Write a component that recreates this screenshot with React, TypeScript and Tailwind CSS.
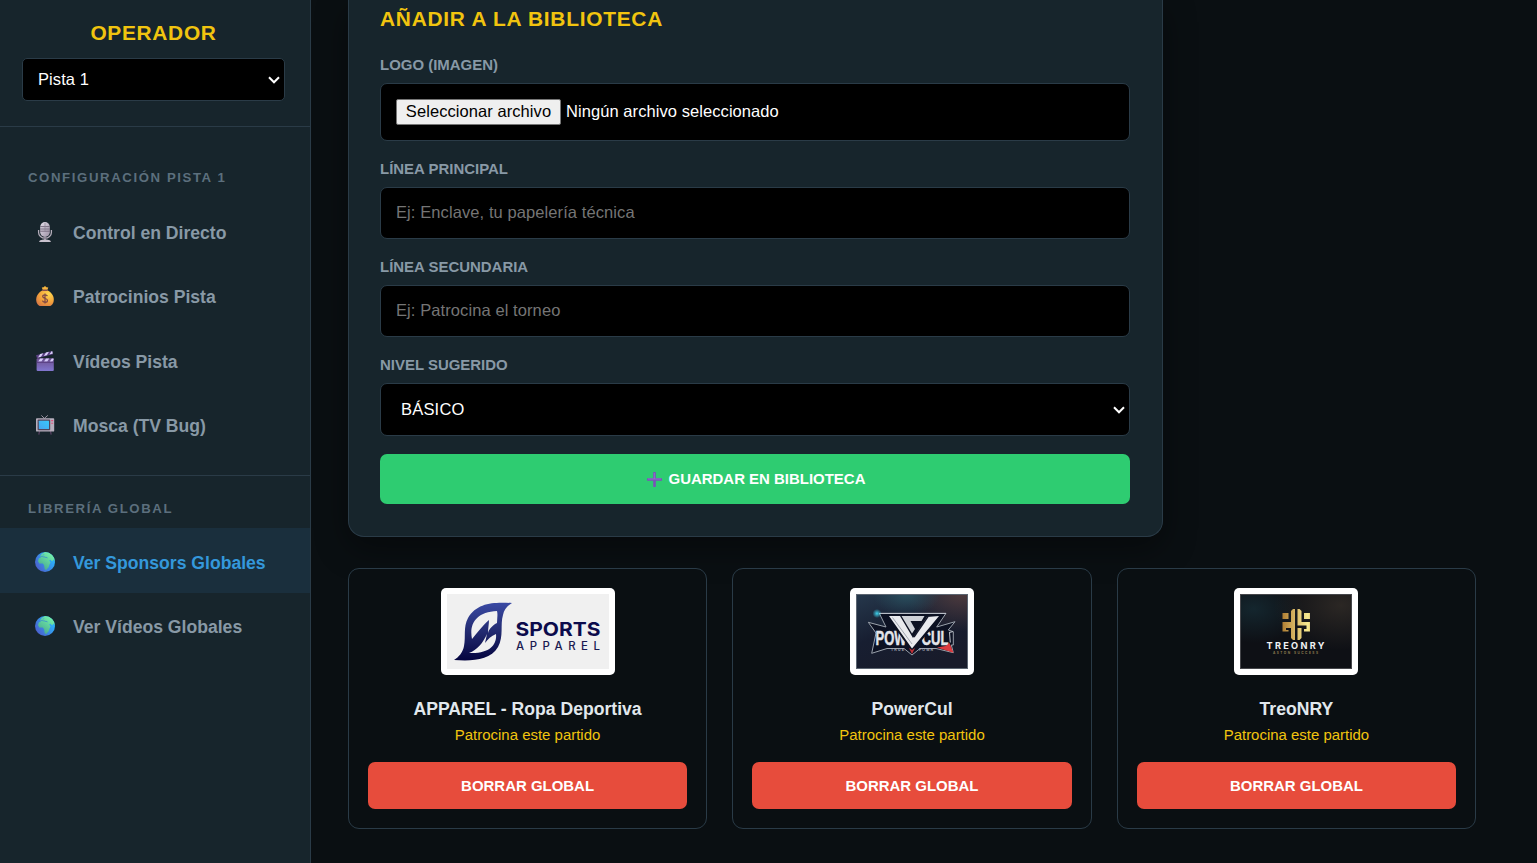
import type { ReactNode } from "react";

const FONT = "font-['Liberation_Sans',Arial,sans-serif]";

function MicIcon() {
  return (
    <svg width="20" height="20" viewBox="0 0 20 20">
      <defs>
        <linearGradient id="mic" x1="0" y1="0" x2="1" y2="1">
          <stop offset="0" stopColor="#e6e0ec" />
          <stop offset="1" stopColor="#9b90a3" />
        </linearGradient>
      </defs>
      <path d="M3.600 8v2.400a6.400 5.800 0 0 0 12.800 0V8" fill="none" stroke="#b5adba" strokeWidth="1.300" />
      <rect x="5.200" y="0" width="9.600" height="15" rx="4.800" fill="url(#mic)" />
      <path d="M5.200 4.600h9.600M5.200 7h9.600M5.200 9.200h9.600" stroke="#6f6478" strokeWidth="0.900" />
      <path d="M10 1v8.400" stroke="#8b8193" strokeWidth="0.700" />
      <rect x="9" y="15" width="2" height="3" fill="#8f8696" />
      <path d="M4.200 20c0-1.600 1.400-2.600 5.800-2.600s5.800 1 5.800 2.600z" fill="#c8c1cd" />
    </svg>
  );
}

function MoneyIcon() {
  return (
    <svg width="20" height="20" viewBox="0 0 20 20">
      <defs>
        <radialGradient id="bag" cx="0.7" cy="0.25" r="0.85">
          <stop offset="0" stopColor="#ffd84d" />
          <stop offset="0.6" stopColor="#f3a23c" />
          <stop offset="1" stopColor="#d97a45" />
        </radialGradient>
      </defs>
      <path d="M6.800 1.400 8.600 1.200 10 0l1.400 1.200 1.900.2-1.200 3H8z" fill="#f6b63e" />
      <path d="M8 4.200C4.600 5.400 1.200 9 1.200 13.400c0 4 2 6.600 5 6.600h7.600c3 0 5-2.600 5-6.600 0-4.400-3.400-8-6.800-9.200z" fill="url(#bag)" />
      <rect x="7.300" y="3.600" width="5.400" height="1.400" rx="0.700" fill="#8a4f4e" />
      <path d="M12.400 10.200c-.3-1-1.200-1.400-2.400-1.400-1.400 0-2.300.7-2.300 1.800 0 2.600 4.800 1.200 4.800 3.800 0 1.200-1 1.900-2.500 1.900-1.300 0-2.300-.5-2.600-1.600M10 7.600v10" fill="none" stroke="#7d4546" strokeWidth="1.200" />
    </svg>
  );
}

function ClapperIcon() {
  return (
    <svg width="20" height="20" viewBox="0 0 20 20">
      <defs>
        <linearGradient id="clap" x1="0" y1="0" x2="0" y2="1">
          <stop offset="0" stopColor="#6c4f8e" />
          <stop offset="1" stopColor="#8176cf" />
        </linearGradient>
      </defs>
      <path d="M1 4.200 17 0l1 3.200L2 7.200z" fill="#5b4184" />
      <path d="m3 6.400 2.200-3.300 3-.8L6 5.700zM8.800 4.900 11 1.600l3-.8-2.200 3.400zM14.400 3.500l2.200-3.300.6-.1.600 2.500z" fill="#dcd3fb" />
      <rect x="1.600" y="7.200" width="17.200" height="12.800" rx="1" fill="url(#clap)" />
      <path d="m3.200 10.600 2-3h3.200l-2 3zM9 10.600l2-3h3.200l-2 3zM14.800 10.600l2-3h1.800v1l-1.200 2z" fill="#d6cbfa" />
      <path d="M1.600 11.300h17.200" stroke="#543a7a" strokeWidth="0.900" />
    </svg>
  );
}

function TvIcon() {
  return (
    <svg width="20" height="20" viewBox="0 0 20 20">
      <defs>
        <linearGradient id="tv" x1="1" y1="0" x2="0" y2="1">
          <stop offset="0" stopColor="#38c8fb" />
          <stop offset="1" stopColor="#46a4ee" />
        </linearGradient>
      </defs>
      <path d="M6.400.4 9.400 3.400 12.800.4" fill="none" stroke="#a79fae" strokeWidth="0.900" />
      <path d="M4.600 16 3.800 19.600M15.400 16l.8 3.600" stroke="#54405f" strokeWidth="1.300" />
      <rect x="1" y="3.200" width="18.200" height="13.400" rx="0.900" fill="#b7afbd" />
      <rect x="2.600" y="4.600" width="12.600" height="10.600" rx="0.800" fill="#51475c" />
      <rect x="3.800" y="5.800" width="10.200" height="8.200" rx="0.500" fill="url(#tv)" />
      <path d="M16.200 5.600h2M16.200 8.200h2" stroke="#e0527d" strokeWidth="1.100" />
    </svg>
  );
}

function GlobeIcon() {
  return (
    <svg width="20" height="20" viewBox="0 0 20 20">
      <defs>
        <linearGradient id="sea" x1="0.900" y1="0.400" x2="0.200" y2="0.900">
          <stop offset="0" stopColor="#2bb0fb" />
          <stop offset="1" stopColor="#4a63cf" />
        </linearGradient>
        <linearGradient id="land" x1="1" y1="0" x2="0.300" y2="1">
          <stop offset="0" stopColor="#7dffb0" />
          <stop offset="1" stopColor="#48a98f" />
        </linearGradient>
        <clipPath id="globe">
          <circle cx="10" cy="10" r="10" />
        </clipPath>
      </defs>
      <g clipPath="url(#globe)">
        <rect width="20" height="20" fill="url(#sea)" />
        <path
          d="M7 1.800 10 0h7l3 4v5.400l-1.600-1.800-1.200 1.800-1.800-1.600-1.200.8 1.400 2-1 1.600-1 3-2.400 2.700-1.500-.6-.6-4-1.200-1.700-3.600-.2L3 9.200l.8-2.600 2-1.200-.6-1.300z"
          fill="url(#land)"
        />
        <path d="M5.600 4.700c1.800-.8 2.300.4 3.700.2 1.200.9 2.600.3 3.200 1" fill="none" stroke="#3a86d4" strokeWidth="0.800" />
        <path d="M9 2.200 7.800 3.600" stroke="#3fa6e6" strokeWidth="0.900" />
      </g>
    </svg>
  );
}

function PlusIcon() {
  return (
    <svg width="15" height="15" viewBox="0 0 15 15">
      <path d="M7.500.8v13.400M.8 7.500h13.400" stroke="#7b52b8" strokeWidth="2.600" strokeLinecap="round" />
      <path d="M7.300 1v6M1 7h13" stroke="#9b72d6" strokeWidth="0.800" />
    </svg>
  );
}

function Chevron({ className }: { className: string }) {
  return (
    <svg width="12" height="8" viewBox="0 0 12 8" className={`absolute pointer-events-none ${className}`}>
      <path d="m1 1.300 5 5 5-5" fill="none" stroke="#ffffff" strokeWidth="2" />
    </svg>
  );
}

function ApparelLogo() {
  return (
    <svg width="162" height="75" viewBox="0 0 162 75">
      <defs>
        <linearGradient id="apparel" x1="0" y1="0" x2="0" y2="1">
          <stop offset="0" stopColor="#3a4aa4" />
          <stop offset="0.500" stopColor="#232b70" />
          <stop offset="1" stopColor="#04043f" />
        </linearGradient>
      </defs>
      <rect width="162" height="75" fill="#f0f0f0" />
      <path
        fillRule="evenodd"
        fill="url(#apparel)"
        d="M65 9C48 8 30 8 21 24c-5 9-2 19-4 28-1 6-5 11-10 14 17 1 36 1 44-13 6-11 2-22 5-32 1-5 4-9 9-12zM25 45c-3-15 4-27 25-28 1 4 0 8 0 12-4 2-8 6-9 10 0-5 1-9 1-13-6 5-12 13-17 19zM22 59c8-3 14-10 18-19l-2 9c3-4 6-7 11-9 1 10-5 20-27 19z"
      />
      <text x="68.500" y="41.600" fontFamily="Inter, sans-serif" fontWeight="700" fontSize="19" fill="#0c0b4c" textLength="85" lengthAdjust="spacingAndGlyphs">
        SPORTS
      </text>
      <text x="69" y="55.800" fontFamily="Inter, sans-serif" fontWeight="500" fontSize="11.400" fill="#1b1a50" textLength="84">
        APPAREL
      </text>
    </svg>
  );
}

function PowerLogo() {
  return (
    <svg width="112" height="75" viewBox="0 0 112 75">
      <defs>
        <linearGradient id="powerBg" x1="0" y1="0" x2="0.600" y2="1">
          <stop offset="0" stopColor="#26384c" />
          <stop offset="0.500" stopColor="#171e31" />
          <stop offset="1" stopColor="#181b2a" />
        </linearGradient>
        <radialGradient id="powerWarm" cx="0.950" cy="0" r="0.500">
          <stop offset="0" stopColor="#4d3a3d" />
          <stop offset="1" stopColor="#4d3a3d" stopOpacity="0" />
        </radialGradient>
        <radialGradient id="powerTeal" cx="0.450" cy="0" r="0.300">
          <stop offset="0" stopColor="#2a4f5e" />
          <stop offset="1" stopColor="#2a4f5e" stopOpacity="0" />
        </radialGradient>
        <radialGradient id="spark">
          <stop offset="0" stopColor="#3ed2ee" />
          <stop offset="1" stopColor="#3ed2ee" stopOpacity="0" />
        </radialGradient>
      </defs>
      <rect width="112" height="75" fill="url(#powerBg)" />
      <rect width="112" height="75" fill="url(#powerWarm)" />
      <rect width="112" height="75" fill="url(#powerTeal)" />
      <rect x="0.500" y="0.500" width="111" height="74" fill="none" stroke="#5b6470" />
      <path
        d="M12.300 28.300 30 33l-6.700-13.700H90L80.700 33 99 27.700 92.300 36l5 1.700V51l-2 0 2 7.700L80 54.500H64L56 61l-8-6.500H31l-15.300 4.800L20 39z"
        fill="#0c1122"
        stroke="#9aa1ab"
        strokeWidth="1"
      />
      <g fontFamily="Liberation Sans, Arial, sans-serif" fontWeight="700" fill="#e4e5ea" stroke="#e4e5ea" strokeWidth="0.500">
        <text x="19.500" y="51" fontSize="21" textLength="31" lengthAdjust="spacingAndGlyphs">
          POW
        </text>
        <text x="65.500" y="51" fontSize="21" textLength="27" lengthAdjust="spacingAndGlyphs">
          CUL
        </text>
      </g>
      <path d="M30 21h57L56 58z" fill="#0c1122" />
      <path d="M33 22h11l13 22 14-21 12-1L56 54.500z" fill="#e9eaee" />
      <path d="M45.500 22h23l-3 5H54.500l4.500 8-3 4.500z" fill="#cfd2d8" />
      <path d="M36.500 23.500 56 50" stroke="#8e949f" strokeWidth="0.800" />
      <path d="M72 22.500 58 43" stroke="#131729" strokeWidth="1.400" />
      <path d="M23 19.500h67" stroke="#b9bec7" strokeWidth="1.200" />
      <path d="m56 60-3-6 3 2 3-2z" fill="#bd3238" />
      <path d="m81 53.500 8.500-1.500 4-3 4 9.700z" fill="#dc3b40" />
      <path d="m97 37.500-3.500 1 .8 10" fill="none" stroke="#b5bac2" strokeWidth="1.100" />
      <circle cx="21" cy="19.500" r="4.500" fill="url(#spark)" />
      <g fontFamily="Liberation Sans, Arial, sans-serif" fontWeight="700" fontSize="3.500" fill="#a7abb6">
        <text x="35" y="57" textLength="13">
          TRUE
        </text>
        <text x="63" y="57" textLength="14">
          POWR
        </text>
      </g>
    </svg>
  );
}

function TreonryLogo() {
  return (
    <svg width="112" height="75" viewBox="0 0 112 75">
      <defs>
        <radialGradient id="treoTeal" cx="0.120" cy="0.200" r="0.450">
          <stop offset="0" stopColor="#14262e" />
          <stop offset="1" stopColor="#14262e" stopOpacity="0" />
        </radialGradient>
        <radialGradient id="treoBrown" cx="0.900" cy="0.150" r="0.600">
          <stop offset="0" stopColor="#2b2724" />
          <stop offset="1" stopColor="#2b2724" stopOpacity="0" />
        </radialGradient>
        <linearGradient id="gold" gradientUnits="userSpaceOnUse" x1="42" y1="0" x2="71" y2="0">
          <stop offset="0" stopColor="#ae7c31" />
          <stop offset="0.450" stopColor="#d9b765" />
          <stop offset="0.900" stopColor="#f7ea91" />
          <stop offset="1" stopColor="#dfc067" />
        </linearGradient>
      </defs>
      <rect width="112" height="75" fill="#0e1015" />
      <rect width="112" height="75" fill="url(#treoTeal)" />
      <rect width="112" height="75" fill="url(#treoBrown)" />
      <rect x="0.500" y="0.500" width="111" height="74" fill="none" stroke="#45464a" />
      <g fill="url(#gold)">
        <path d="M42.500 19h6v6h-6zM64 19h6v6h-6z" />
        <path d="m51 17 2-2h2v31h-2l-2-2V34h-5v2h2.500v1.500h-6V28H51z" />
        <path d="M57.500 15h2l2 2v11H70v9.500h-6V35h2.500v-3.500h-9z" />
        <path d="M57.500 34h4v10l-2 2h-2z" />
      </g>
      <text x="26.500" y="54.800" fontFamily="Inter, sans-serif" fontWeight="700" fontSize="9.200" fill="#f1f1f2" textLength="58">
        TREONRY
      </text>
      <text x="33" y="60.300" fontFamily="Inter, sans-serif" fontWeight="700" fontSize="3.200" fill="#8d7b50" textLength="45">
        ASTON SUCCESS
      </text>
    </svg>
  );
}

interface NavItemProps {
  icon: ReactNode;
  label: string;
  active?: boolean;
}

function NavItem({ icon, label, active = false }: NavItemProps) {
  return (
    <button
      className={`flex h-[64.400px] w-full items-center pt-[3px] pl-[35px] text-left text-[17.600px] font-bold ${
        active ? "bg-[#1a2f3d] text-[#3498db]" : "text-[#8899a6]"
      }`}
    >
      <span className="mr-[18px] w-5 shrink-0">{icon}</span>
      <span className="pt-[2px]">{label}</span>
    </button>
  );
}

function Field({ label, children }: { label: string; children: ReactNode }) {
  return (
    <div className="mb-[18px]">
      <label className="mb-2 block h-5 text-[14.960px] leading-[19px] font-bold text-[#8899a6]">{label}</label>
      {children}
    </div>
  );
}

const inputClass =
  "block h-[52px] w-full rounded-[7px] border border-[#2a3b47] bg-black px-[15px] pb-[2px] text-[16.500px] tracking-[0.090px] text-white placeholder:text-[#757575]";

const sponsors = [
  { name: "APPAREL - Ropa Deportiva", tagline: "Patrocina este partido", logo: <ApparelLogo /> },
  { name: "PowerCul", tagline: "Patrocina este partido", logo: <PowerLogo /> },
  { name: "TreoNRY", tagline: "Patrocina este partido", logo: <TreonryLogo /> },
];

function Sidebar() {
  return (
    <aside className="w-[311px] shrink-0 border-r border-[#2a3b47] bg-[#17252c]">
      <div className="h-[127px] border-b border-[#2a3b47] pt-[18px] pr-[25px] pl-[22px]">
        <h1 className="h-10 text-center text-[20.900px] leading-[29px] font-bold tracking-[0.680px] text-[#f1c40f]">OPERADOR</h1>
        <div className="relative">
          <select className="block h-[43px] w-full appearance-none rounded-[5px] border border-[#2a3b47] bg-black px-[15px] text-[16.500px] tracking-[0.090px] text-white">
            <option>Pista 1</option>
          </select>
          <Chevron className="top-[18px] right-[5px]" />
        </div>
      </div>

      <nav>
        <p className="h-[71.400px] pt-[41px] pl-7 text-[13.200px] leading-5 font-bold tracking-[1.600px] text-[#5c6f7d]">
          CONFIGURACIÓN PISTA 1
        </p>
        <NavItem icon={<MicIcon />} label="Control en Directo" />
        <NavItem icon={<MoneyIcon />} label="Patrocinios Pista" />
        <NavItem icon={<ClapperIcon />} label="Vídeos Pista" />
        <NavItem icon={<TvIcon />} label="Mosca (TV Bug)" />
        <p className="mt-[19px] h-[53.400px] border-t border-[#2a3b47] pt-[23px] pl-7 text-[13.200px] leading-5 font-bold tracking-[1.600px] text-[#5c6f7d]">
          LIBRERÍA GLOBAL
        </p>
        <NavItem icon={<GlobeIcon />} label="Ver Sponsors Globales" active />
        <NavItem icon={<GlobeIcon />} label="Ver Vídeos Globales" />
      </nav>
    </aside>
  );
}

export default function App() {
  return (
    <div className={`flex h-[863px] w-full overflow-hidden bg-[#0a0f12] ${FONT}`}>
      <Sidebar />

      <main className="flex-1 overflow-hidden pl-[37px]">
        <section className="h-[537px] w-[815px] rounded-b-[16px] border border-t-0 border-[#2a3b47] bg-[#17252c] pt-[4px] pr-8 pl-[31px] shadow-[0_11px_33px_rgba(0,0,0,0.400)]">
          <h2 className="mb-[21px] h-[30px] text-[20.900px] leading-[30px] font-bold tracking-[0.730px] text-[#f1c40f]">
            AÑADIR A LA BIBLIOTECA
          </h2>

          <Field label="LOGO (IMAGEN)">
            <div className="flex h-[58px] w-full items-center rounded-[7px] border border-[#2a3b47] bg-black px-[15px] text-[16.500px] tracking-[0.070px] text-white">
              <button className="mr-[5px] h-[26px] w-[165px] rounded-[2px] border border-[#767676] bg-[#efefef] pb-[2px] text-center leading-[22px] text-black">
                Seleccionar archivo
              </button>
              <span className="pb-[2px]">Ningún archivo seleccionado</span>
            </div>
          </Field>

          <Field label="LÍNEA PRINCIPAL">
            <input className={inputClass} placeholder="Ej: Enclave, tu papelería técnica" />
          </Field>

          <Field label="LÍNEA SECUNDARIA">
            <input className={inputClass} placeholder="Ej: Patrocina el torneo" />
          </Field>

          <Field label="NIVEL SUGERIDO">
            <div className="relative">
              <select className="block h-[53px] w-full appearance-none rounded-[7px] border border-[#2a3b47] bg-black px-5 text-[16.500px] tracking-[0.200px] text-white">
                <option>BÁSICO</option>
              </select>
              <Chevron className="top-[23px] right-[5px]" />
            </div>
          </Field>

          <button className="flex h-[50px] w-full items-center justify-center gap-[7px] rounded-[7px] bg-[#2ecc71] pl-[2px] text-[14.960px] font-bold text-white">
            <PlusIcon />
            <span className="pt-px">GUARDAR EN BIBLIOTECA</span>
          </button>
        </section>

        <div className="mt-[31px] grid w-[1128px] grid-cols-3 gap-[25.300px]">
          {sponsors.map((s) => (
            <article
              key={s.name}
              className="flex h-[261px] flex-col items-center rounded-[11px] border border-[#2a3b47] bg-[#0a0f12] px-[19px] pt-[19px]"
            >
              <div className="rounded-[5px] bg-white p-[6px]">{s.logo}</div>
              <h3 className="mt-[22px] text-[17.600px] leading-6 font-bold text-[#e1e8ed]">{s.name}</h3>
              <p className="mt-1 text-[14.960px] leading-5 text-[#f1c40f]">{s.tagline}</p>
              <button className="mt-[17px] h-[47px] w-full rounded-[7px] bg-[#e74c3c] pt-px text-[14.960px] font-bold text-white">
                BORRAR GLOBAL
              </button>
            </article>
          ))}
        </div>
      </main>
    </div>
  );
}
